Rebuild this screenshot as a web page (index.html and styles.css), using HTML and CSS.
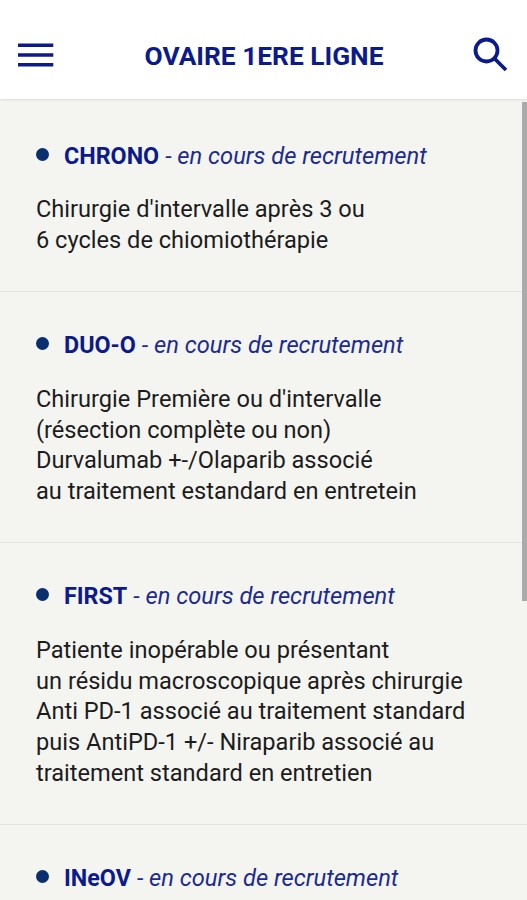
FILE: index.html
```html
<!DOCTYPE html>
<html lang="fr">
<head>
  <meta charset="UTF-8" />
  <meta name="viewport" content="width=device-width, initial-scale=1.0"/>
  <title>Ovaire 1ere ligne</title>
  <link rel="stylesheet" href="styles.css">
</head>
<body>
  <header class="topbar">
    <button class="icon-btn" aria-label="Menu">
      <svg width="36" height="26" viewBox="0 0 36 26"><path d="M0 3.2h35.3M0 13h35.3M0 22.8h35.3" /></svg>
    </button>
    <h1>OVAIRE 1ERE LIGNE</h1>
    <button class="icon-btn search" aria-label="Rechercher">
      <svg width="36" height="36" viewBox="0 0 36 36"><circle cx="13.5" cy="13.5" r="11" /><path d="M21.5 21.5L33 33" /></svg>
    </button>
  </header>

  <main class="list">
    <article class="trial">
      <h2><span class="dot"></span><b>CHRONO</b><i>- en cours de recrutement</i></h2>
      <p>Chirurgie d'intervalle après 3 ou<br>6 cycles de chiomiothérapie</p>
    </article>
    <article class="trial">
      <h2><span class="dot"></span><b>DUO-O</b><i>- en cours de recrutement</i></h2>
      <p>Chirurgie Première ou d'intervalle<br>(résection complète ou non)<br>Durvalumab +-/Olaparib associé<br>au traitement estandard en entretein</p>
    </article>
    <article class="trial">
      <h2><span class="dot"></span><b>FIRST</b><i>- en cours de recrutement</i></h2>
      <p>Patiente inopérable ou présentant<br>un résidu macroscopique après chirurgie<br>Anti PD-1 associé au traitement standard<br>puis AntiPD-1 +/- Niraparib associé au<br>traitement standard en entretien</p>
    </article>
    <article class="trial">
      <h2><span class="dot"></span><b>INeOV</b><i>- en cours de recrutement</i></h2>
    </article>
    <div class="scrollbar"></div>
  </main>
</body>
</html>
```

FILE: styles.css
```css
html, body {
  margin: 0;
  padding: 0;
  height: 100%;
  overflow: hidden;
  background: #f4f5f1;
  font-family: Roboto, sans-serif;
}

body {
  display: flex;
  flex-direction: column;
}

.topbar {
  display: flex;
  align-items: center;
  justify-content: space-between;
  flex: none;
  box-sizing: border-box;
  height: 99px;
  padding: 11px 18px 0;
  background: #fff;
  box-shadow: 0 1px 2px rgba(0, 0, 0, 0.1);
  z-index: 1;
}

.topbar h1 {
  margin: 1px 0 0 1px;
  font-size: 26.3px;
  font-weight: 700;
  color: #0b1a8c;
}

.icon-btn {
  display: flex;
  padding: 0;
  border: none;
  background: none;
}

.icon-btn svg {
  fill: none;
  stroke: #0b1a8c;
  stroke-width: 3.4;
}

.search svg {
  margin-top: -1px;
  stroke-width: 3.8;
}

.list {
  position: relative;
  flex: 1;
  padding-top: 3.3px;
  overflow: hidden;
}

.trial {
  padding: 38.3px 36px 34.9px;
  border-bottom: 1px solid #e2e3e2;
}

.trial h2 {
  display: flex;
  align-items: center;
  margin: 0 0 22.7px;
  font-size: 23.7px;
  font-weight: 400;
  line-height: 31px;
  color: #0b1a8c;
  white-space: nowrap;
}

.trial b {
  margin-right: 6px;
  font-size: 23.3px;
}

.trial i {
  color: #1c2b90;
}

.trial p {
  margin: 0;
  font-size: 23.6px;
  line-height: 30.8px;
  color: #1c1c1c;
  white-space: nowrap;
}

.dot {
  width: 13px;
  height: 13px;
  margin: 0 15px 4px 0;
  border-radius: 50%;
  background: #0a2f6f;
}

.scrollbar {
  position: absolute;
  top: 3px;
  right: 0;
  width: 5px;
  height: 499px;
  background: #a9aaa9;
}
```
